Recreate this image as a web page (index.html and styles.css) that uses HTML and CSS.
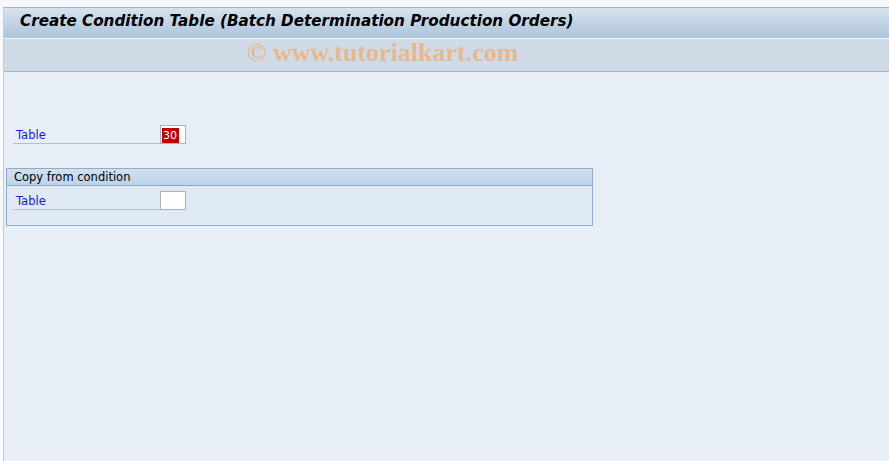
FILE: index.html
```html
<!DOCTYPE html>
<html lang="en">
<head>
    <meta charset="UTF-8">
    <title>Create Condition Table</title>
    <link rel="stylesheet" href="styles.css">
</head>
<body>
    <div class="window">
        <!-- タイトルバー -->
        <div class="title-bar">
            <h1>Create Condition Table (Batch Determination Production Orders)</h1>
        </div>

        <!-- ツールバー -->
        <div class="toolbar">
            <span class="watermark">© www.tutorialkart.com</span>
        </div>

        <div class="content">
            <div class="field-row first-row">
                <label class="field-label">Table</label>
                <span class="field-input"><span class="value-error">30</span></span>
            </div>

            <div class="group-box">
                <div class="group-title">Copy from condition</div>
                <div class="group-body">
                    <div class="field-row">
                        <label class="field-label">Table</label>
                        <span class="field-input"></span>
                    </div>
                </div>
            </div>
        </div>
    </div>
</body>
</html>
```

FILE: styles.css
```css
/* ページ全体 */
body {
    margin: 0;
    padding: 0;
    background-color: #f6f8fc;
    font-family: "DejaVu Sans", sans-serif;
    width: 889px;
    height: 461px;
    overflow: hidden;
}

.window {
    margin-top: 7px;
    margin-left: 3px;
    height: 454px;
    border-top: 1px solid #a6b1c1;
    border-left: 1px solid #c3cbd8;
    background-color: #e8eef6;
}

/* タイトルバー */
.title-bar {
    height: 30px;
    background: linear-gradient(to bottom, #d6e2ee, #adc4da);
    border-bottom: 1px solid #f2f6fa;
}

.title-bar h1 {
    margin: 0;
    padding: 2px 0 0 16px;
    font-family: "DejaVu Sans", sans-serif;
    font-size: 15.2px;
    font-weight: bold;
    font-style: italic;
    line-height: 22px;
    color: #000;
}

/* ツールバー */
.toolbar {
    height: 32px;
    background-color: #cedbe7;
    border-bottom: 1px solid #a9b5c5;
}

.watermark {
    display: inline-block;
    margin-left: 243px;
    margin-top: 0;
    font-family: "Liberation Serif", serif;
    font-size: 26px;
    font-weight: bold;
    color: #e8b88c;
    line-height: 28px;
}

/* 入力エリア */
.content {
    padding-top: 52px;
}

.field-row {
    display: flex;
    align-items: flex-end;
    height: 20px;
}

.first-row {
    margin-left: 9px;
}

.field-label {
    width: 147px;
    border-bottom: 1px solid #b8bfc9;
    font-size: 11.5px;
    color: #1717e6;
    padding-left: 3px;
    line-height: 16px;
    box-sizing: border-box;
}

.field-input {
    width: 26px;
    height: 19px;
    box-sizing: border-box;
    background-color: #fff;
    border: 1px solid #a9b1bc;
    padding: 2px 0 0 1px;
}

.value-error {
    display: block;
    width: 17px;
    height: 15px;
    background-color: #c00000;
    color: #fff;
    font-size: 11px;
    line-height: 15px;
    padding-left: 1px;
    box-sizing: border-box;
}

/* グループボックス */
.group-box {
    margin: 24px 0 0 2px;
    width: 587px;
    height: 58px;
    box-sizing: border-box;
    border: 1px solid #91abc9;
    background-color: #dfe9f3;
}

.group-title {
    height: 16px;
    background: linear-gradient(to bottom, #d2e1f0, #bcd3e8);
    border-bottom: 1px solid #8aa4c2;
    font-size: 11.5px;
    line-height: 16px;
    padding-left: 7px;
    color: #000;
}

.group-body {
    padding: 4px 0 0 6px;
}
```
